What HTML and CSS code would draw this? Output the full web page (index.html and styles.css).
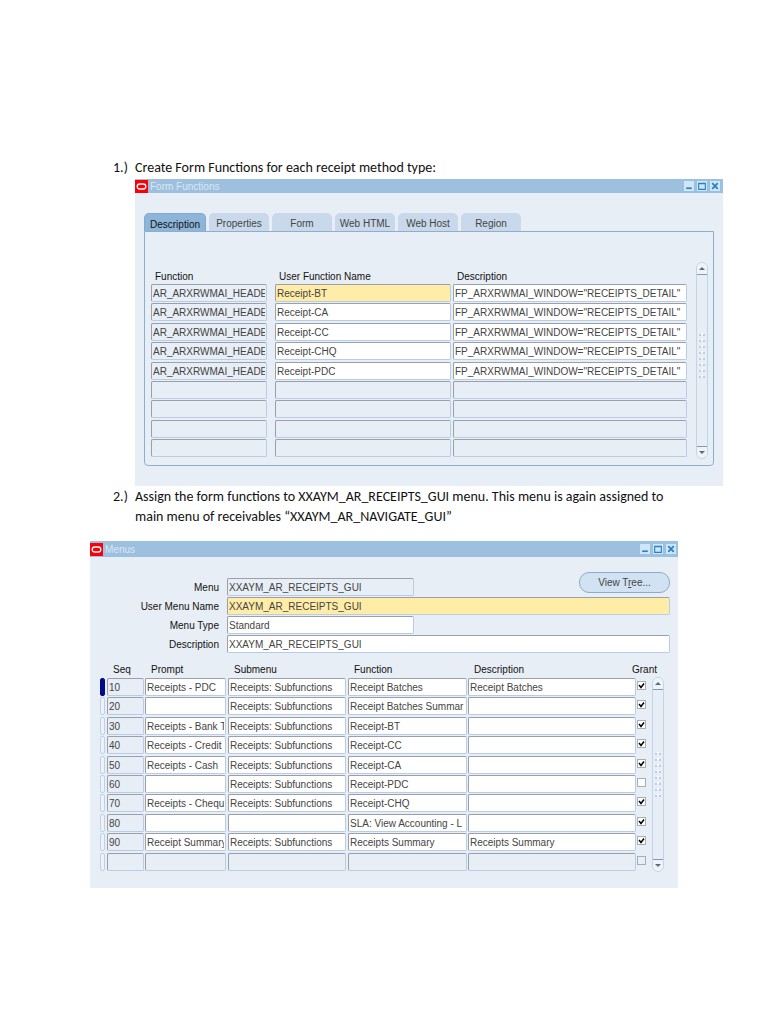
FILE: index.html
```html
<!DOCTYPE html>
<html lang="en">
<head>
<meta charset="utf-8">
<title>Receipt form functions</title>
<link rel="stylesheet" href="styles.css">
</head>
<body>
<main class="page">
  <ol class="steps">
    <li class="step">
      <span class="num">1.)</span>
      <p class="text">Create Form Functions for each receipt method type:</p>
    </li>
  </ol>

  <section class="window functions" aria-label="Form Functions">
    <header class="titlebar">
      <svg class="logo" viewBox="0 0 13 13" aria-hidden="true"><rect width="13" height="13" fill="#fb0009"/><rect x="2.2" y="4" width="8.6" height="5" rx="2.5" fill="none" stroke="#fff" stroke-width="1.3"/></svg>
      <h2 class="title">Form Functions</h2>
      <button class="wbtn" aria-label="Minimize"><svg viewBox="0 0 9 9"><path d="M2 6.5h5" stroke="#2582c4" stroke-width="1.5"/></svg></button>
      <button class="wbtn" aria-label="Maximize"><svg viewBox="0 0 9 9"><path d="M1.5 2h6v5.500h-6z M1.500 2.500h6" fill="none" stroke="#2582c4"/></svg></button>
      <button class="wbtn" aria-label="Close"><svg viewBox="0 0 9 9"><path d="M2 2l5 5M7 2l-5 5" stroke="#2582c4" stroke-width="1.600"/></svg></button>
    </header>
    <div class="tabs" role="tablist">
      <button class="tab active" role="tab" aria-selected="true">Description</button>
      <button class="tab" role="tab">Properties</button>
      <button class="tab" role="tab">Form</button>
      <button class="tab" role="tab">Web HTML</button>
      <button class="tab" role="tab">Web Host</button>
      <button class="tab" role="tab">Region</button>
    </div>
    <div class="panel">
      <table class="grid">
        <colgroup><col class="f-name"><col class="f-user"><col></colgroup>
        <thead><tr><th>Function</th><th>User Function Name</th><th>Description</th></tr></thead>
        <tbody id="functions"></tbody>
      </table>
      <div class="scroll">
        <button class="arrow up" aria-label="Scroll up"></button>
        <span class="grip"></span>
        <button class="arrow down" aria-label="Scroll down"></button>
      </div>
    </div>
  </section>

  <ol class="steps" start="2">
    <li class="step">
      <span class="num">2.)</span>
      <p class="text">Assign the form functions to XXAYM_AR_RECEIPTS_GUI menu. This menu is again assigned to main menu of receivables “XXAYM_AR_NAVIGATE_GUI”</p>
    </li>
  </ol>

  <section class="window menus" aria-label="Menus">
    <header class="titlebar">
      <svg class="logo" viewBox="0 0 13 13" aria-hidden="true"><rect width="13" height="13" fill="#fb0009"/><rect x="2.2" y="4" width="8.6" height="5" rx="2.5" fill="none" stroke="#fff" stroke-width="1.3"/></svg>
      <h2 class="title">Menus</h2>
      <button class="wbtn" aria-label="Minimize"><svg viewBox="0 0 9 9"><path d="M2 6.5h5" stroke="#2582c4" stroke-width="1.5"/></svg></button>
      <button class="wbtn" aria-label="Maximize"><svg viewBox="0 0 9 9"><path d="M1.500 2h6v5.500h-6z M1.500 2.500h6" fill="none" stroke="#2582c4"/></svg></button>
      <button class="wbtn" aria-label="Close"><svg viewBox="0 0 9 9"><path d="M2 2l5 5M7 2l-5 5" stroke="#2582c4" stroke-width="1.600"/></svg></button>
    </header>
    <form class="fields">
      <label for="menu">Menu</label>
      <div class="pair"><input class="box short plain" id="menu" value="XXAYM_AR_RECEIPTS_GUI"><button type="button" class="tree">View T<u>r</u>ee...</button></div>
      <label for="uname">User Menu Name</label>
      <input class="box current" id="uname" value="XXAYM_AR_RECEIPTS_GUI">
      <label for="mtype">Menu Type</label>
      <input class="box short" id="mtype" value="Standard">
      <label for="desc">Description</label>
      <input class="box" id="desc" value="XXAYM_AR_RECEIPTS_GUI">
    </form>
    <div class="entries">
      <table class="grid">
        <colgroup><col class="m-mark"><col class="m-seq"><col class="m-prompt"><col class="m-sub"><col class="m-sub"><col><col class="m-grant"></colgroup>
        <thead><tr><th></th><th>Seq</th><th>Prompt</th><th>Submenu</th><th>Function</th><th>Description</th><th><span class="grant">Grant</span></th></tr></thead>
        <tbody id="entries"></tbody>
      </table>
      <div class="scroll">
        <button class="arrow up" aria-label="Scroll up"></button>
        <span class="grip"></span>
        <button class="arrow down" aria-label="Scroll down"></button>
      </div>
    </div>
  </section>
</main>
<script src="app.js"></script>
</body>
</html>
```
FILE: app.js
```js
const cell = (value, label, cls = "") =>
  `<td><input class="box ${cls}" aria-label="${label}" value="${value.replace(/"/g, "&quot;")}"></td>`;

const names = ["Receipt-BT", "Receipt-CA", "Receipt-CC", "Receipt-CHQ", "Receipt-PDC", "", "", "", ""];
document.getElementById("functions").innerHTML = names.map((name, i) => {
  const empty = name ? "" : "plain";
  return "<tr>" +
    cell(name && "AR_ARXRWMAI_HEADE", "Function", "plain") +
    cell(name, "User Function Name", i === 0 ? "current" : empty) +
    cell(name && 'FP_ARXRWMAI_WINDOW="RECEIPTS_DETAIL"', "Description", empty) +
    "</tr>";
}).join("");

const sub = "Receipts: Subfunctions";
const entries = [
  ["10", "Receipts - PDC", sub, "Receipt Batches", "Receipt Batches", true],
  ["20", "", sub, "Receipt Batches Summar", "", true],
  ["30", "Receipts - Bank T", sub, "Receipt-BT", "", true],
  ["40", "Receipts - Credit", sub, "Receipt-CC", "", true],
  ["50", "Receipts - Cash", sub, "Receipt-CA", "", true],
  ["60", "", sub, "Receipt-PDC", "", false],
  ["70", "Receipts - Chequ", sub, "Receipt-CHQ", "", true],
  ["80", "", "", "SLA: View Accounting - L", "", true],
  ["90", "Receipt Summary", sub, "Receipts Summary", "Receipts Summary", true],
  ["", "", "", "", "", false]
];
document.getElementById("entries").innerHTML = entries.map((e, i) => {
  const empty = e[0] ? "" : "plain";
  return "<tr>" +
    `<td><span class="mark${i === 0 ? " on" : ""}"></span></td>` +
    cell(e[0], "Seq", "plain") +
    cell(e[1], "Prompt", empty) +
    cell(e[2], "Submenu", empty) +
    cell(e[3], "Function", empty) +
    cell(e[4], "Description", empty) +
    `<td><input type="checkbox" class="check ${empty}" aria-label="Grant"${e[5] ? " checked" : ""}></td>` +
    "</tr>";
}).join("");
```
FILE: styles.css
```css
* { box-sizing: border-box; }

body {
  margin: 0;
  background: #fff;
  color: #111;
  font-family: Carlito, Lato, "Liberation Sans", sans-serif;
}

.page { padding: 158px 90px 40px; }

.steps { list-style: none; margin: 0; padding: 0 0 0 23px; }
.step { display: flex; }
.num { flex: none; width: 22px; }
.text { margin: 0; }
.num, .text { font-size: 14px; line-height: 20px; }

.window {
  background: #e8eef5;
  font-family: "Liberation Sans", Arial, sans-serif;
  font-size: 10px;
  color: #222;
}
.window button, .window input { font: inherit; color: #444; }
.functions { margin: 1px -45px 1px 45px; padding-bottom: 20px; }
.menus { margin-top: 14px; padding-bottom: 16px; }

.titlebar {
  display: flex;
  align-items: center;
  gap: 3px;
  height: 14px;
  padding-right: 3px;
  background: #9ec0df;
}
.menus .titlebar { height: 16px; padding-right: 2px; }
.logo { width: 13px; height: 13px; }
.title { flex: 1; margin: 0 0 0 -1px; font-size: 10px; font-weight: normal; color: #d9e6f3; }
.wbtn { width: 10px; height: 10px; padding: 0; border: 0; background: #cfe6fa; }
.wbtn svg { display: block; width: 10px; height: 10px; }

.tabs { display: flex; gap: 3px; padding: 20px 9px 0; }
.tab {
  width: 60px;
  height: 18px;
  padding: 3px 0 0;
  border: 0;
  border-radius: 5px 5px 0 0;
  background: #c9d8ea;
}
.window .tab.active {
  width: 62px;
  background: #8db5da;
  color: #111;
  border: 1px solid #83a9cf;
  border-bottom: 0;
}

.panel {
  display: flex;
  gap: 9px;
  margin: 0 9px;
  padding: 30px 5px 6px 6px;
  border: 1px solid #8eaed0;
  border-radius: 0 0 4px 4px;
}

.grid { flex: 1; width: 0; table-layout: fixed; border-collapse: collapse; }
.grid th { height: 22px; padding: 6px 0 0 4px; text-align: left; font-weight: normal; white-space: nowrap; color: #111; }
.grid td { height: 19px; padding: 0 2px 1px 0; vertical-align: top; }
.grid tr:nth-child(5n + 2) td, .grid tr:nth-child(5n + 4) td { height: 20px; }
.f-name { width: 124px; }
.f-user { width: 178px; }
.functions td:first-child { padding-right: 8px; }
.functions td:last-child { padding-right: 0; }

.box {
  display: block;
  width: 100%;
  height: 18px;
  padding: 0 1px;
  border: 1px solid #b9cce6;
  border-top-color: #9a9fa8;
  border-left-color: #9a9fa8;
  border-radius: 2px;
  background: #fff;
}
.box.plain { background: #e8eef5; }
.box.current { background: #ffeca6; }

.scroll {
  display: flex;
  flex-direction: column;
  justify-content: space-between;
  width: 12px;
  border: 1px solid #c3d3ea;
  border-radius: 6px;
  background: #e8eef5;
}
.arrow { position: relative; height: 12px; padding: 0; border: 0 solid #8299b5; border-radius: 5px; background: #eef3f9; }
.arrow.up { border-bottom-width: 1px; border-radius: 5px 5px 0 0; }
.arrow.down { border-top-width: 1px; border-radius: 0 0 5px 5px; }
.arrow::after { content: ""; position: absolute; left: 2px; top: 4px; border: 3px solid transparent; }
.arrow.up::after { border-top: 0; border-bottom-color: #5d6878; }
.arrow.down::after { border-bottom: 0; border-top-color: #5d6878; }
.grip {
  height: 48px;
  margin: 0 2px;
  background:
    radial-gradient(circle at 1px 3px, #c0cedf 1px, transparent 1px) 0 0 / 4px 6px,
    radial-gradient(circle at 1px 1px, #f8fafd 1px, transparent 1px) 2px 1px / 4px 6px;
}
.functions .grip { margin-top: -10px; }

.fields {
  display: grid;
  grid-template-columns: 119px 1fr;
  column-gap: 8px;
  row-gap: 1px;
  align-items: center;
  padding: 15px 8px 0 10px;
}
.fields label { text-align: right; color: #111; }
.fields label:first-child { padding-top: 7px; }
.pair { display: flex; justify-content: space-between; align-items: flex-end; height: 24px; }
.pair .tree { align-self: flex-start; }
.box.short { width: 187px; }
.fields .box { height: 18px; }
.fields .box + label { padding-top: 1px; }
.tree {
  width: 91px;
  height: 21px;
  padding: 0;
  border: 1px solid #90abc9;
  border-radius: 10px;
  background: #d1e2f3;
}

.entries { display: flex; gap: 5px; padding: 3px 14px 0 10px; }
.entries th { height: 22px; padding-top: 5px; }
.entries th:nth-child(2) { padding-left: 6px; }
.entries th:nth-child(3), .entries th:nth-child(4), .entries th:nth-child(5), .entries th:nth-child(6) { padding-left: 6px; }
.entries th:last-child { padding: 5px 0 0; }
.grant { margin-left: -5px; }
.entries .scroll { margin-top: 21px; }
.entries td:nth-child(n + 5), .entries td:nth-child(2) { padding-right: 1px; }
.m-mark { width: 7px; }
.m-seq { width: 38px; }
.m-prompt { width: 83px; }
.m-sub { width: 120px; }
.m-grant { width: 10px; }
.mark { display: block; width: 5px; height: 18px; border: 1px solid #c0d0e8; border-radius: 2px; background: #edf2f8; }
.mark.on { background: #000d8a; border-color: #000d8a; }

.check {
  appearance: none;
  display: block;
  width: 9px;
  height: 9px;
  margin: 3px 0 0;
  border: 1px solid #a9aeb6;
  background: #fff;
}
.check.plain { background: #e8eef5; }
.check:checked {
  background: #fff url("data:image/svg+xml,%3Csvg xmlns='http://www.w3.org/2000/svg' viewBox='0 0 7 7'%3E%3Cpath d='M1 3l2 2.500L6 1.500' fill='none' stroke='black' stroke-width='1.500'/%3E%3C/svg%3E");
}
```
